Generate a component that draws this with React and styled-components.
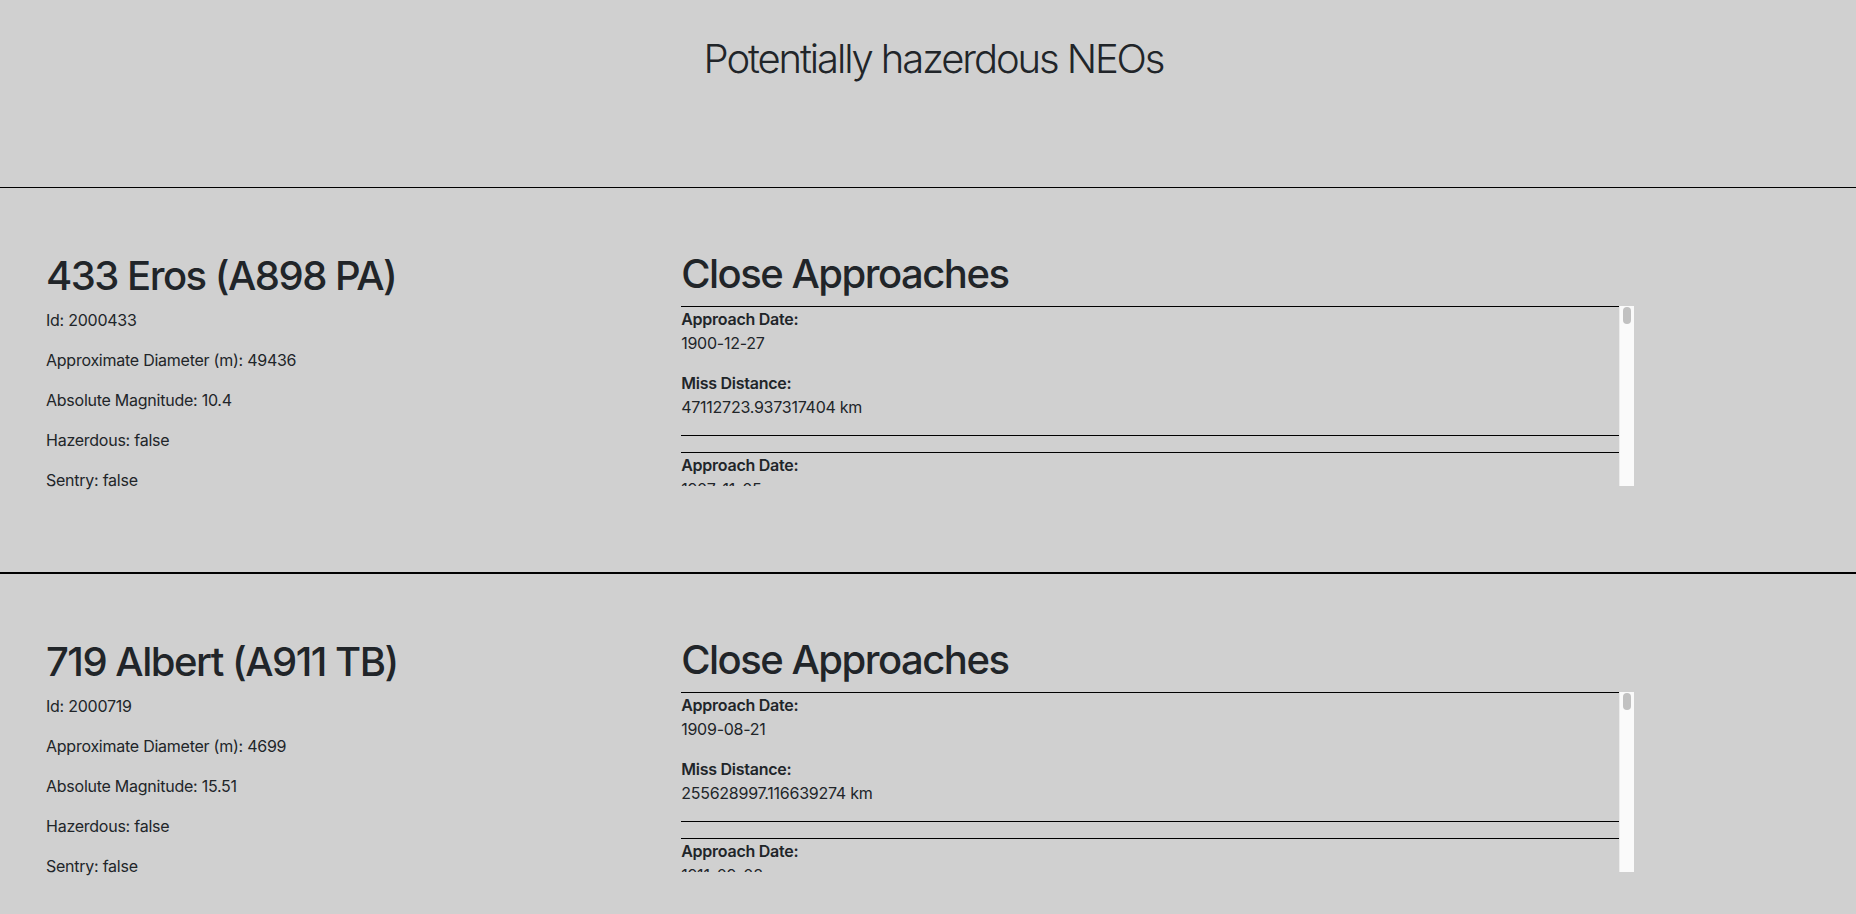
import React from "react";
import styled, { createGlobalStyle } from "styled-components";

const GlobalStyle = createGlobalStyle`
  html::-webkit-scrollbar {
    width: 0;
    height: 0;
  }
  body {
    margin: 0;
    background: #d0d0d0;
    color: #212529;
    font-family: Inter, "Noto Sans", "Liberation Sans", sans-serif;
    font-size: 16px;
    line-height: 1.5;
    letter-spacing: -0.25px;
  }
  *, *::before, *::after { box-sizing: border-box; }
`;

const Page = styled.main`
  width: 100%;
`;

const Header = styled.header`
  height: 187px;
  padding: 35px 0 0 11px;
  text-align: center;
`;

const Title = styled.h1`
  margin: 0;
  font-size: 40px;
  font-weight: 300;
  line-height: 1.2;
  letter-spacing: -2.1px;
`;

const Card = styled.section`
  border-top: 1px solid #000;
  border-bottom: 1px solid #000;
  padding: 64px 222px 64px 46px;
  display: grid;
  grid-template-columns: 2fr 3fr;
  align-items: start;
`;

const Heading = styled.h1`
  margin: 0 0 8px;
  font-size: 40px;
  font-weight: 500;
  line-height: 1.2;
  letter-spacing: -1.5px;
`;

const InfoColumn = styled.div`
  display: flex;
  flex-direction: column;
`;

const InfoLine = styled.p`
  margin: 0 0 16px;
`;

const ApproachColumn = styled.div`
  margin-top: -2px;
`;

const ScrollArea = styled.div`
  height: 180px;
  display: flex;
`;

const ApproachList = styled.div`
  flex: 1;
  min-width: 0;
  overflow-y: auto;
  scrollbar-width: none;
`;

const ScrollTrack = styled.div`
  flex: 0 0 15px;
  background: #fafafa;
  border-left: 1px solid #ececec;
  padding: 1px 3px 0 3px;
`;

const ScrollThumb = styled.div`
  width: 8px;
  height: 17px;
  border-radius: 4px;
  background: #c1c1c1;
`;

const Approach = styled.div`
  border-top: 1px solid #000;
  border-bottom: 1px solid #000;
  margin-bottom: 16px;
`;

const Field = styled.p`
  margin: 0 0 16px;
`;

const Label = styled.strong`
  font-weight: 600;
`;

const neos = [
  {
    name: "433 Eros (A898 PA)",
    id: "2000433",
    diameter: "49436",
    magnitude: "10.4",
    hazardous: "false",
    sentry: "false",
    approaches: [
      ["1900-12-27", "47112723.937317404"],
      ["1907-11-05", "70533782.06026127"],
      ["1917-04-20", "64463958.47236873"],
      ["1924-03-05", "37993147.02638201"],
      ["1931-01-30", "26175375.21447918"],
      ["1938-01-16", "33432131.56620813"],
      ["1944-12-14", "48812046.8751734"],
      ["1951-11-19", "72307025.22046012"],
      ["1961-04-16", "67412418.80297638"],
      ["1968-02-28", "43053036.76019316"],
      ["1975-01-23", "22574466.90282843"],
      ["1982-01-17", "33844010.01524917"],
      ["1988-12-13", "53121738.38403911"],
    ],
  },
  {
    name: "719 Albert (A911 TB)",
    id: "2000719",
    diameter: "4699",
    magnitude: "15.51",
    hazardous: "false",
    sentry: "false",
    approaches: [
      ["1909-08-21", "255628997.116639274"],
      ["1911-09-08", "29237332.62508941"],
      ["1913-10-28", "181839286.9412063"],
      ["1920-08-14", "251106338.3385132"],
      ["1922-09-05", "33092765.25003018"],
      ["1924-10-21", "176009741.5271462"],
      ["1931-08-11", "246738219.8302179"],
      ["1933-09-02", "36922803.68201734"],
      ["1935-10-16", "170398816.4206721"],
      ["1942-08-07", "242211003.0714926"],
      ["1944-08-29", "41055210.91852302"],
      ["1946-10-12", "165049237.6630128"],
      ["1953-08-03", "237602671.3906128"],
    ],
  },
];

function NeoCard({ neo }) {
  return (
    <Card>
      <InfoColumn>
        <Heading>{neo.name}</Heading>
        <InfoLine>Id: {neo.id}</InfoLine>
        <InfoLine>Approximate Diameter (m): {neo.diameter}</InfoLine>
        <InfoLine>Absolute Magnitude: {neo.magnitude}</InfoLine>
        <InfoLine>Hazerdous: {neo.hazardous}</InfoLine>
        <InfoLine>Sentry: {neo.sentry}</InfoLine>
      </InfoColumn>
      <ApproachColumn>
        <Heading>Close Approaches</Heading>
        <ScrollArea>
          <ApproachList>
            {neo.approaches.map(([date, miss]) => (
              <Approach key={date}>
                <Field>
                  <Label>Approach Date:</Label>
                  <br />
                  {date}
                </Field>
                <Field>
                  <Label>Miss Distance:</Label>
                  <br />
                  {miss} km
                </Field>
              </Approach>
            ))}
          </ApproachList>
          <ScrollTrack>
            <ScrollThumb />
          </ScrollTrack>
        </ScrollArea>
      </ApproachColumn>
    </Card>
  );
}

export default function App() {
  return (
    <Page>
      <GlobalStyle />
      <Header>
        <Title>Potentially hazerdous NEOs</Title>
      </Header>
      {neos.map((neo) => (
        <NeoCard key={neo.id} neo={neo} />
      ))}
    </Page>
  );
}
